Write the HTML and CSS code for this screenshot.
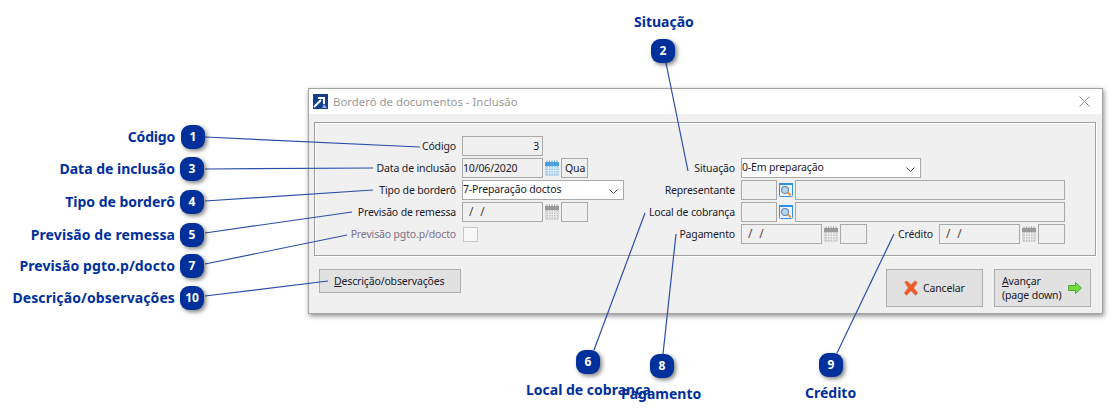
FILE: index.html
```html
<!DOCTYPE html>
<html lang="pt-BR">
<head>
    <meta charset="UTF-8">
    <title>Borderô de documentos - Inclusão</title>
    <link rel="stylesheet" href="styles.css">
</head>
<body>
    <svg class="icon-defs" width="0" height="0">
        <symbol id="cal" viewBox="0 0 14 16">
            <rect x="0.5" y="2.5" width="13" height="13" fill="currentColor" opacity="0.55"/>
            <rect x="0" y="2" width="14" height="4" fill="currentColor"/>
            <path d="M2 0.5v3M4.5 0.5v3M7 0.5v3M9.5 0.5v3M12 0.5v3" stroke="currentColor" stroke-width="1"/>
            <path d="M1 8h12M1 10.5h12M1 13h12M3.5 6v9M6 6v9M8.5 6v9M11 6v9" stroke="#fff" stroke-width="1" opacity="0.75"/>
        </symbol>
        <symbol id="lupa" viewBox="0 0 14 14">
            <rect x="0.5" y="0.5" width="13" height="13" rx="1" fill="#eef4fa" stroke="#2f8fe6"/>
            <rect x="0" y="0" width="14" height="2" fill="#2f8fe6"/>
            <circle cx="6" cy="7" r="3.5" fill="#b5d3ee" stroke="#5f86a8" stroke-width="1.1"/>
            <path d="M8.8 9.6l3 2.6" stroke="#e8913a" stroke-width="2"/>
        </symbol>
    </svg>

    <div class="canvas">
        <div class="window">
            <div class="titlebar">
                <svg class="app-logo" width="15" height="15" viewBox="0 0 15 15">
                    <rect width="15" height="15" fill="#123f8f"/>
                    <path d="M1 13L8 6M5 4h6v6" fill="none" stroke="#fff" stroke-width="2"/>
                    <path d="M9 14l2-4 3 4z" fill="#8fb0dc"/>
                </svg>
                <span class="window-title">Borderô de documentos - Inclusão</span>
                <svg class="close-x" width="11" height="11" viewBox="0 0 11 11">
                    <path d="M0.5 0.5l10 10M10.5 0.5l-10 10" stroke="#8c8c8c" stroke-width="1" fill="none"/>
                </svg>
            </div>
            <div class="window-body">
                <div class="panel">
                    <div class="col col-left">
                        <div class="row">
                            <label class="lbl lbl-left">Código</label>
                            <div class="field w-81 num">3</div>
                        </div>
                        <div class="row">
                            <label class="lbl lbl-left">Data de inclusão</label>
                            <div class="field w-81">10/06/2020</div>
                            <svg class="ico cal-on"><use href="#cal"/></svg>
                            <div class="field w-27">Qua</div>
                        </div>
                        <div class="row">
                            <label class="lbl lbl-left">Tipo de borderô</label>
                            <div class="field combo w-162">7-Preparação doctos
                                <svg class="chev" width="9" height="6" viewBox="0 0 9 6"><path d="M0.5 0.5l4 4 4-4" fill="none" stroke="#444"/></svg>
                            </div>
                        </div>
                        <div class="row">
                            <label class="lbl lbl-left">Previsão de remessa</label>
                            <div class="field w-81 date">/ /</div>
                            <svg class="ico cal-off"><use href="#cal"/></svg>
                            <div class="field w-27"></div>
                        </div>
                        <div class="row">
                            <label class="lbl lbl-left lbl-off">Previsão pgto.p/docto</label>
                            <div class="check"></div>
                        </div>
                    </div>
                    <div class="col col-right">
                        <div class="row">
                            <label class="lbl lbl-right">Situação</label>
                            <div class="field combo w-180">0-Em preparação
                                <svg class="chev" width="9" height="6" viewBox="0 0 9 6"><path d="M0.5 0.5l4 4 4-4" fill="none" stroke="#444"/></svg>
                            </div>
                        </div>
                        <div class="row">
                            <label class="lbl lbl-right">Representante</label>
                            <div class="field w-36"></div>
                            <svg class="ico ico-lupa"><use href="#lupa"/></svg>
                            <div class="field w-270"></div>
                        </div>
                        <div class="row">
                            <label class="lbl lbl-right">Local de cobrança</label>
                            <div class="field w-36"></div>
                            <svg class="ico ico-lupa"><use href="#lupa"/></svg>
                            <div class="field w-270"></div>
                        </div>
                        <div class="row">
                            <label class="lbl lbl-right">Pagamento</label>
                            <div class="field w-81 date">/ /</div>
                            <svg class="ico cal-off"><use href="#cal"/></svg>
                            <div class="field w-27"></div>
                            <label class="lbl lbl-credito">Crédito</label>
                            <div class="field w-81 date">/ /</div>
                            <svg class="ico cal-off"><use href="#cal"/></svg>
                            <div class="field w-27"></div>
                        </div>
                    </div>
                </div>
                <div class="footer">
                    <button class="btn btn-desc"><u>D</u>escrição/observações</button>
                    <div class="footer-right">
                        <button class="btn btn-big btn-cancel">
                            <svg width="16" height="16" viewBox="0 0 16 16">
                                <path d="M1.5 2L4 0.8 8 4.5 12 0.8l2.5 1.7-3.5 5.5 4 5-2.5 2.5L8 11l-4.5 4.5L1 13l4-5z" fill="#ee5a2c" stroke="#d8a090" stroke-width="0.7"/>
                            </svg>
                            <span>Cancelar</span>
                        </button>
                        <button class="btn btn-big btn-next">
                            <span class="next-text"><u>A</u>vançar<br>(page down)</span>
                            <svg width="14" height="12" viewBox="0 0 14 12">
                                <path d="M0.5 3.5h7v-3l6 5.5-6 5.5v-3h-7z" fill="#6fdc3c" stroke="#5aa83a"/>
                            </svg>
                        </button>
                    </div>
                </div>
            </div>
        </div>

        <svg class="leaders" width="1115" height="420">
            <line x1="205" y1="137" x2="420" y2="147"/>
            <line x1="205" y1="169" x2="373" y2="168"/>
            <line x1="205" y1="201" x2="373" y2="190"/>
            <line x1="205" y1="233" x2="352" y2="212"/>
            <line x1="205" y1="264" x2="347" y2="235"/>
            <line x1="205" y1="296" x2="328" y2="281"/>
            <line x1="666" y1="63" x2="688" y2="171"/>
            <line x1="594" y1="350" x2="645" y2="213"/>
            <line x1="663" y1="354" x2="676" y2="234"/>
            <line x1="837" y1="353" x2="894" y2="234"/>
        </svg>

        <span class="cap cap-left cap-1">Código</span>
        <span class="cap cap-left cap-3">Data de inclusão</span>
        <span class="cap cap-left cap-4">Tipo de borderô</span>
        <span class="cap cap-left cap-5">Previsão de remessa</span>
        <span class="cap cap-left cap-7">Previsão pgto.p/docto</span>
        <span class="cap cap-left cap-10">Descrição/observações</span>
        <span class="cap cap-2">Situação</span>
        <span class="cap cap-6">Local de cobrança</span>
        <span class="cap cap-8">Pagamento</span>
        <span class="cap cap-9">Crédito</span>

        <div class="pin pin-1">1</div>
        <div class="pin pin-2">2</div>
        <div class="pin pin-3">3</div>
        <div class="pin pin-4">4</div>
        <div class="pin pin-5">5</div>
        <div class="pin pin-6">6</div>
        <div class="pin pin-7">7</div>
        <div class="pin pin-8">8</div>
        <div class="pin pin-9">9</div>
        <div class="pin pin-10">10</div>
    </div>
</body>
</html>
```

FILE: styles.css
```css
body {
    margin: 0;
    background-color: #ffffff;
    font-family: 'Noto Sans', Tahoma, sans-serif;
    overflow: hidden;
}
.icon-defs {
    position: absolute;
}
.canvas {
    position: relative;
    width: 1115px;
    height: 420px;
    overflow: hidden;
}

/* janela */
.window {
    position: absolute;
    left: 308px;
    top: 88px;
    width: 795px;
    height: 226px;
    box-sizing: border-box;
    border: 1px solid #a3a3a3;
    background-color: #f0f0f0;
    box-shadow: 1px 2px 5px rgba(0, 0, 0, 0.45);
    font-size: 10.5px;
    letter-spacing: -0.15px;
    color: #1a1a2a;
}
.titlebar {
    display: flex;
    align-items: center;
    height: 25px;
    padding: 0 12px 0 4px;
    background-color: #ffffff;
}
.app-logo {
    margin-right: 5px;
}
.window-title {
    flex: 1;
    color: #999999;
    font-size: 11.4px;
    letter-spacing: 0;
}
.window-body {
    padding: 8px 6px 0 5px;
}
.panel {
    display: flex;
    box-sizing: border-box;
    height: 134px;
    padding: 13px 0 0 0;
    border: 1px solid #a0a0a0;
    box-shadow: 1px 1px 0 #ffffff, inset 1px 1px 0 #ffffff;
}
.col {
    display: flex;
    flex-direction: column;
    gap: 2px;
}
.col-left {
    width: 320px;
}
.col-right {
    padding-top: 22px;
}
.row {
    display: flex;
    align-items: center;
    gap: 2px;
    height: 20px;
}
.lbl {
    text-align: right;
    margin-right: 4px;
    white-space: nowrap;
}
.lbl-left {
    width: 141px;
}
.lbl-right {
    width: 100px;
}
.lbl-off {
    color: #7d6f86;
}
.lbl-credito {
    width: 64px;
}
.field {
    position: relative;
    box-sizing: border-box;
    height: 20px;
    line-height: 18px;
    padding: 0 1px 0 0;
    border: 1px solid #a9a9a9;
    white-space: nowrap;
}
.w-27 { width: 27px; padding-left: 3px; }
.w-36 { width: 36px; }
.w-81 { width: 81px; }
.w-162 { width: 162px; }
.w-180 { width: 180px; }
.w-270 { width: 270px; }
.num {
    text-align: right;
    padding-right: 3px;
}
.date {
    padding-left: 6px;
    font-size: 12px;
    word-spacing: 4px;
    color: #5a3f30;
}
.combo {
    background-color: #ffffff;
    line-height: 16px;
}
.chev {
    position: absolute;
    right: 5px;
    top: 8px;
}
.check {
    width: 13px;
    height: 13px;
    margin-left: 1px;
    background-color: #f8f8f8;
    border: 1px solid #c8c8c8;
}
.ico {
    width: 14px;
    height: 16px;
    flex: none;
}
.ico-lupa {
    height: 14px;
}
.cal-on {
    color: #4f9fde;
}
.cal-off {
    color: #9a9a9a;
}

/* botoes */
.footer {
    display: flex;
    justify-content: space-between;
    align-items: flex-start;
    padding: 13px 5px 0 5px;
}
.footer-right {
    display: flex;
    gap: 11px;
}
.btn {
    box-sizing: border-box;
    border: 1px solid #adadad;
    background-color: #e1e1e1;
    font-family: inherit;
    font-size: 10.5px;
    letter-spacing: -0.15px;
    color: #1a1a2a;
    padding: 0;
}
.btn-desc {
    width: 142px;
    height: 24px;
    text-align: left;
    padding-left: 14px;
}
.btn-big {
    display: flex;
    align-items: center;
    gap: 4px;
    width: 97px;
    height: 38px;
}
.btn-cancel {
    padding-left: 16px;
}
.btn-next {
    justify-content: space-between;
    padding: 0 8px 0 7px;
}
.next-text {
    text-align: left;
    line-height: 14px;
}

/* chamadas */
.leaders {
    position: absolute;
    left: 0;
    top: 0;
}
.leaders line {
    stroke: #2a4fa8;
    stroke-width: 1.2;
}
.pin {
    position: absolute;
    width: 24px;
    height: 24px;
    line-height: 24px;
    text-align: center;
    border-radius: 9px;
    background-color: #00309c;
    box-shadow: 2px 2px 4px rgba(0, 0, 0, 0.5);
    color: #ffffff;
    font-size: 12px;
    font-weight: 700;
}
.pin-1 { left: 181px; top: 125px; }
.pin-3 { left: 180px; top: 157px; }
.pin-4 { left: 180px; top: 190px; }
.pin-5 { left: 180px; top: 223px; }
.pin-7 { left: 180px; top: 254px; }
.pin-10 { left: 180px; top: 286px; }
.pin-2 { left: 651px; top: 39px; }
.pin-6 { left: 576px; top: 350px; }
.pin-8 { left: 650px; top: 354px; }
.pin-9 { left: 819px; top: 353px; }
.cap {
    position: absolute;
    color: #00309c;
    font-size: 14px;
    font-weight: 700;
    letter-spacing: 0.1px;
    line-height: 18px;
    white-space: nowrap;
}
.cap-left {
    right: 940px;
}
.cap-1 { top: 128px; letter-spacing: -0.2px; }
.cap-3 { top: 160px; letter-spacing: 0; }
.cap-4 { top: 193px; letter-spacing: 0; }
.cap-5 { top: 226px; }
.cap-7 { top: 257px; }
.cap-10 { top: 289px; }
.cap-2 { left: 634px; top: 13px; letter-spacing: 0; }
.cap-6 { left: 526px; top: 381px; letter-spacing: 0; }
.cap-8 { left: 621px; top: 385px; letter-spacing: 0; }
.cap-9 { left: 805px; top: 384px; letter-spacing: 0; }
```
